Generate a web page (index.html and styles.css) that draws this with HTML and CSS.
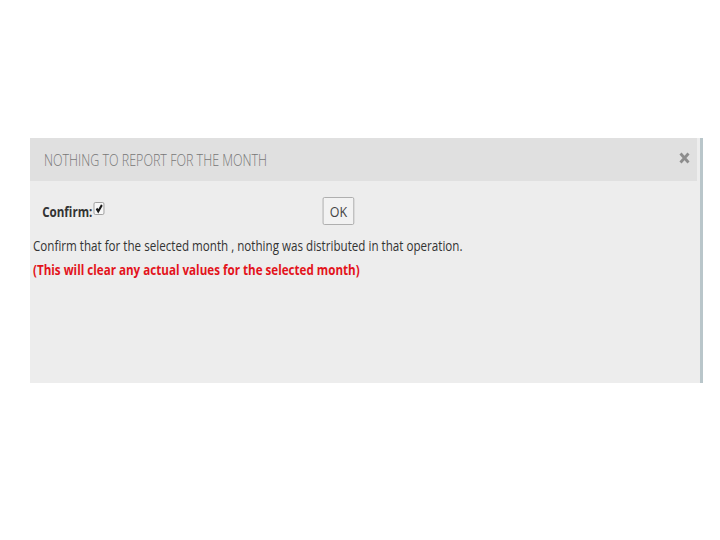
FILE: index.html
```html
<!DOCTYPE html>
<html>
<head>
<meta charset="utf-8">
<link rel="stylesheet" href="styles.css">
</head>
<body>
<div class="page">
  <div class="dialog">
    <div class="dialog-header">
      <span class="dialog-title">NOTHING TO REPORT FOR THE MONTH</span>
      <span class="dialog-close">
        <svg width="11" height="12" viewBox="0 0 11 12"><path d="M1.5 1.5 L9.5 10.5 M9.5 1.5 L1.5 10.5" stroke="#858585" stroke-width="2.8" stroke-linecap="butt"/></svg>
      </span>
    </div>
    <div class="dialog-body">
      <div class="squeeze">
        <div class="confirm-row">
          <label class="confirm-label">Confirm:<span class="confirm-check"><svg width="12" height="12" viewBox="0 0 12 12"><path d="M2.8 6 L5 9.2 L9.8 2.2" fill="none" stroke="#1a1a1a" stroke-width="2.6"/></svg></span></label>
          <button class="ok-btn">OK</button>
        </div>
        <p class="info">Confirm that for the selected month , nothing was distributed in that operation.</p>
        <p class="warning">(This will clear any actual values for the selected month)</p>
      </div>
    </div>
  </div>
</div>
</body>
</html>
```
FILE: styles.css
```css
html, body {
  margin: 0;
  padding: 0;
  background: #ffffff;
}
body {
  font-family: "Open Sans", "Noto Sans", sans-serif;
  width: 720px;
  height: 540px;
  overflow: hidden;
}
.page {
  padding-top: 138px;
  padding-left: 30px;
}
.dialog {
  width: 670px;
  height: 245px;
  background: #ededed;
  border-right: 3px solid #b9c6ca;
  display: flex;
  flex-direction: column;
}
.dialog-header {
  height: 43px;
  background: #e0e0e0;
  display: flex;
  align-items: center;
  justify-content: space-between;
  padding: 0 7px 0 14px;
  box-sizing: border-box;
  margin-right: 3px;
}
.dialog-title {
  display: inline-block;
  font-size: 16px;
  font-weight: 300;
  color: #777;
  white-space: nowrap;
  transform: scaleX(0.78);
  transform-origin: left center;
  margin-top: 1px;
}
.dialog-close {
  display: flex;
  margin-top: -4px;
  opacity: 0.9;
}
.dialog-body {
  padding: 16px 0 0 3px;
}
.squeeze {
  transform: scaleX(0.83);
  transform-origin: left top;
  width: 780px;
}
.confirm-row {
  display: flex;
  align-items: center;
  height: 28px;
}
.confirm-label {
  font-size: 14px;
  font-weight: 700;
  color: #333;
  margin-left: 11px;
  width: 338px;
  display: flex;
  align-items: center;
}
.confirm-check {
  display: inline-flex;
  width: 11px;
  height: 11px;
  margin: -5px 0 0 1px;
  border: 1px solid #9a9a9a;
  border-radius: 2px;
  background: #f7f7f7;
}
.confirm-check svg {
  width: 11px;
  height: 11px;
}
.ok-btn {
  font-family: "Open Sans", sans-serif;
  font-size: 15px;
  color: #444;
  width: 38px;
  height: 28px;
  padding: 0;
  background: #f2f2f2;
  border: 1px solid #a9a9a9;
  border-radius: 2px;
}
.info {
  margin: 11px 0 0 0;
  font-size: 14px;
  color: #333;
  line-height: 20px;
  white-space: nowrap;
}
.warning {
  margin: 4px 0 0 0;
  font-size: 14px;
  font-weight: 700;
  color: #e3131b;
  line-height: 20px;
  white-space: nowrap;
}
```
